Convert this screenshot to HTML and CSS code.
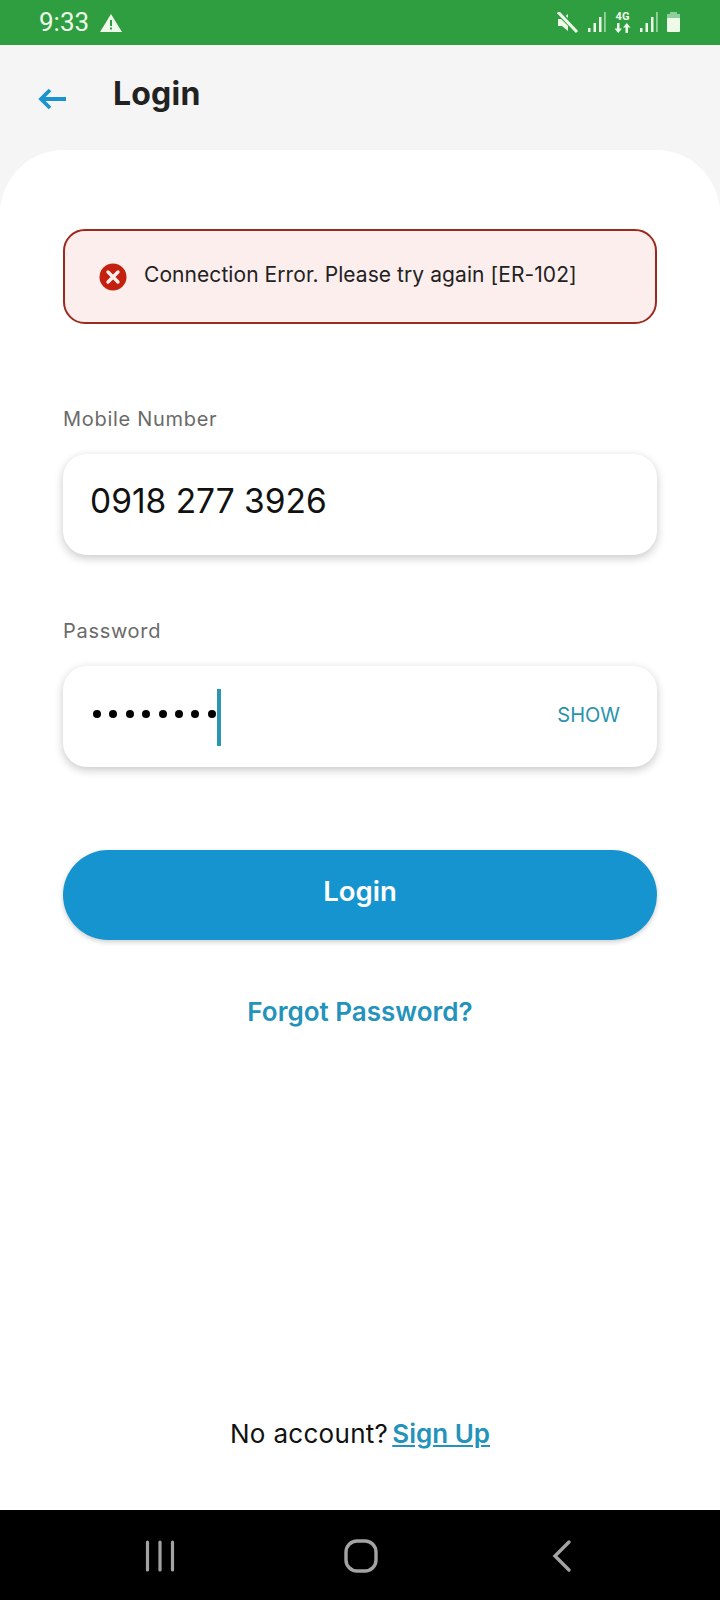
FILE: index.html
```html
<!DOCTYPE html>
<html lang="en">
<head>
<meta charset="utf-8">
<title>Login</title>
<link rel="stylesheet" href="styles.css">
</head>
<body>
<div class="screen">
  <div class="status">
    <div class="status-left">
      <span class="time">9:33</span>
      <svg class="ic-warn" width="22" height="20" viewBox="0 0 22 20"><path fill="#eefbe9" fill-rule="evenodd" d="M11 1 22 19H0ZM10 7v6h2V7Zm0 7.500v2h2v-2Z"/></svg>
    </div>
    <div class="status-right">
      <svg width="22" height="21" viewBox="0 0 22 21"><path fill="#eefbe9" d="M1 7h4l6-5v17l-6-5H1z"/><path d="M2 1 21 20" stroke="#2f9e41" stroke-width="5.500"/><path d="M1 0 20 20" stroke="#eefbe9" stroke-width="3"/></svg>
      <svg width="19" height="21" viewBox="0 0 19 21"><g fill="#eefbe9"><rect x="1" y="16" width="2.500" height="4"/><rect x="6.500" y="11" width="2.500" height="9"/><rect x="12" y="5" width="2.500" height="15"/><rect x="17" y="0" width="1.800" height="20" opacity=".55"/></g></svg>
      <span class="net"><b>4G</b><svg width="17" height="10" viewBox="0 0 17 10"><path fill="#eefbe9" d="M3 0h2.500v5.500H8L4.250 10 .5 5.500H3zM12.750 0l3.750 4.500H14V10h-2.500V4.500H9z"/></svg></span>
      <svg width="19" height="21" viewBox="0 0 19 21"><g fill="#eefbe9"><rect x="1" y="16" width="2.500" height="4"/><rect x="6.500" y="11" width="2.500" height="9"/><rect x="12" y="5" width="2.500" height="15"/><rect x="17" y="0" width="1.800" height="20" opacity=".55"/></g></svg>
      <svg width="15" height="21" viewBox="0 0 15 21"><path fill="#8fcf99" d="M4 0h7v2h3v5H1V2h3z"/><rect fill="#eefbe9" x="1" y="6" width="13" height="14" rx="1"/></svg>
    </div>
  </div>

  <header class="appbar">
    <svg class="back" width="30" height="24" viewBox="0 0 30 24"><path d="M28 12H3M12 3 3 12l9 9" fill="none" stroke="#1b93ce" stroke-width="3.800"/></svg>
    <h1 class="title">Login</h1>
  </header>

  <main class="card">
    <div class="alert">
      <svg class="alert-ic" width="28" height="28" viewBox="0 0 28 28"><circle cx="14" cy="14" r="13.500" fill="#c3200f"/><path d="M9 9l10 10M19 9 9 19" stroke="#fdeeee" stroke-width="3.400" stroke-linecap="round"/></svg>
      <span class="alert-text">Connection Error. Please try again [ER-102]</span>
    </div>

    <label class="label label-mobile">Mobile Number</label>
    <div class="field"><span class="phone">0918 277 3926</span></div>

    <label class="label label-pass">Password</label>
    <div class="field">
      <span class="dots"><i></i><i></i><i></i><i></i><i></i><i></i><i></i><i></i></span>
      <span class="caret"></span>
      <span class="show">SHOW</span>
    </div>

    <button class="btn">Login</button>
    <a class="forgot">Forgot Password?</a>

    <p class="signup"><span class="signup-text">No account?</span><a>Sign Up</a></p>
  </main>

  <nav class="navbar">
    <svg width="32" height="32" viewBox="0 0 32 32"><path d="M3.500 2v28M16 2v28M28.500 2v28" stroke="#a3a3a3" stroke-width="3.200" stroke-linecap="round"/></svg>
    <svg width="34" height="34" viewBox="0 0 34 34"><rect x="2" y="2" width="30" height="30" rx="11" fill="none" stroke="#a3a3a3" stroke-width="3.400"/></svg>
    <svg width="20" height="34" viewBox="0 0 20 34"><path d="M17 3 3 17l14 14" fill="none" stroke="#a3a3a3" stroke-width="3.400" stroke-linecap="round"/></svg>
  </nav>
</div>
</body>
</html>
```

FILE: styles.css
```css
* { box-sizing: border-box; }
html, body { margin: 0; padding: 0; }
body { font-family: "Inter", "Liberation Sans", sans-serif; background: #fff; }
.screen { width: 720px; height: 1600px; display: flex; flex-direction: column; background: #f5f5f5; overflow: hidden; }

.status { height: 45px; flex: none; background: #2f9e41; display: flex; align-items: center; justify-content: space-between; padding: 0 39px 0 39px; color: #eefbe9; }
.status-left { display: flex; align-items: center; gap: 11px; }
.time { font-family: "Roboto", sans-serif; font-size: 26px; line-height: 45px; }
.status-right { display: flex; align-items: center; gap: 8px; }
.net { display: flex; flex-direction: column; align-items: center; width: 17px; gap: 1px; }
.net b { font-family: "Roboto", sans-serif; font-size: 11px; line-height: 10px; }

.appbar { height: 105px; flex: none; display: flex; align-items: flex-start; padding: 0 0 0 38px; }
.back { margin-top: 42px; }
.title { margin: 26px 0 0 45px; font-size: 32px; line-height: 46px; font-weight: 700; color: #222; letter-spacing: .2px; }

.card { flex: 1; background: #fff; border-radius: 64px 64px 0 0; padding: 79px 63px 0; display: flex; flex-direction: column; min-height: 0; }

.alert { height: 95px; flex: none; border: 2px solid #9a2b1c; border-radius: 22px; background: #fdeeee; display: flex; align-items: center; padding: 0 0 0 34px; gap: 17px; }
.alert-text { font-size: 21px; color: #222; white-space: nowrap; margin-top: -4px; letter-spacing: .07px; }

.label { display: block; font-size: 20px; line-height: 28px; color: #6a6a6a; letter-spacing: .7px; }
.label-mobile { margin-top: 81px; }
.label-pass { margin-top: 62px; }

.field { height: 101px; flex: none; margin-top: 21px; background: #fff; border-radius: 24px; box-shadow: 0 3px 10px rgba(0,0,0,.22); display: flex; align-items: center; padding: 0 37px 0 28px; position: relative; }
.phone { font-size: 33.500px; color: #111; margin: -8px 0 0 -1px; }
.dots { display: flex; gap: 8.400px; margin: -6px 0 0 2px; }
.dots i { width: 8px; height: 8px; border-radius: 50%; background: #000; }
.caret { width: 4px; height: 57px; background: #2a96b2; margin: 2px 0 0 1px; }
.show { margin-left: auto; font-size: 20px; color: #2a93ad; margin-top: -4px; }

.btn { height: 90px; flex: none; margin-top: 83px; border: 0; border-radius: 45px; background: #1694d0; color: #fff; font: 600 27.500px "Inter", sans-serif; padding: 0 0 8px; box-shadow: 0 2px 5px rgba(0,0,0,.2); }
.forgot { margin-top: 54px; text-align: center; font-size: 26px; line-height: 36px; font-weight: 600; color: #2493bb; }
.signup { margin: auto 0 56px; display: flex; justify-content: center; gap: 4px; font-size: 26px; line-height: 40px; color: #111; }
.signup-text { letter-spacing: .3px; }
.signup a { color: #2493bb; font-weight: 600; text-decoration: underline; }

.navbar { height: 90px; flex: none; background: #000; display: grid; grid-template-columns: 1fr 1fr 1fr; place-items: center; padding: 2px 58px 0 59px; }
```
